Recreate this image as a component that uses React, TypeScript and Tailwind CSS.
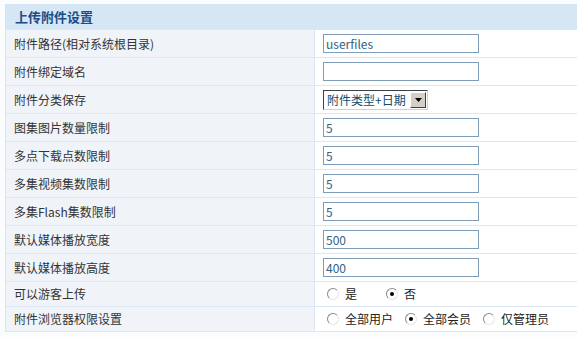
const FONT = { fontFamily: '"Noto Sans CJK SC", "Liberation Sans", sans-serif' }

type Row =
    | { label: string; kind: "input"; value: string }
    | { label: string; kind: "select"; value: string }
    | { label: string; kind: "radio"; options: string[]; checked: number; gaps: string[] }

const ROWS: Row[] = [
    { label: "附件路径(相对系统根目录)", kind: "input", value: "userfiles" },
    { label: "附件绑定域名", kind: "input", value: "" },
    { label: "附件分类保存", kind: "select", value: "附件类型+日期" },
    { label: "图集图片数量限制", kind: "input", value: "5" },
    { label: "多点下载点数限制", kind: "input", value: "5" },
    { label: "多集视频集数限制", kind: "input", value: "5" },
    { label: "多集Flash集数限制", kind: "input", value: "5" },
    { label: "默认媒体播放宽度", kind: "input", value: "500" },
    { label: "默认媒体播放高度", kind: "input", value: "400" },
    { label: "可以游客上传", kind: "radio", options: ["是", "否"], checked: 1, gaps: ["mr-[29px]", ""] },
    { label: "附件浏览器权限设置", kind: "radio", options: ["全部用户", "全部会员", "仅管理员"], checked: 1, gaps: ["mr-[12px]", "mr-[12px]", ""] },
]

function Radio({ on }: { on: boolean }) {
    return (
        <span className="relative inline-flex items-center justify-center w-[12px] h-[12px] rounded-full border border-t-[#8a8a8a] border-l-[#8a8a8a] border-r-[#e6e6e6] border-b-[#e6e6e6] bg-white mr-[6px]">
            {on && <span className="w-[4px] h-[4px] rounded-full bg-black" />}
        </span>
    )
}

function Field({ row }: { row: Row }) {
    if (row.kind === "input") {
        return (
            <div className="w-[156px] h-[19px] border border-[#7f9db9] bg-white flex items-center px-[2px] text-[12px] text-[#35607f]">
                {row.value}
            </div>
        )
    }
    if (row.kind === "select") {
        return (
            <div className="flex items-center h-[20px] w-[105px] border border-t-[#404040] border-l-[#404040] border-r-[#d4d0c8] border-b-[#d4d0c8] bg-white">
                <span className="flex-1 pl-[3px] text-[12px] text-[#0d4d70] leading-none">{row.value}</span>
                <span className="w-[16px] h-[16px] mr-[1px] bg-[#d4d0c8] border border-t-white border-l-white border-r-[#404040] border-b-[#404040] flex items-center justify-center">
                    <svg width="7" height="4" viewBox="0 0 7 4"><path d="M0 0h7L3.5 4z" fill="#000" /></svg>
                </span>
            </div>
        )
    }
    return (
        <div className="flex items-center pl-[4px] text-[12px] text-[#222]">
            {row.options.map((o, i) => (
                <span key={o} className={`flex items-center ${row.gaps[i]}`}>
                    <Radio on={i === row.checked} />
                    {o}
                </span>
            ))}
        </div>
    )
}

export default function App() {
    return (
        <div className="w-[577px] h-[337px] bg-[#fafcfe] pt-[4px] pl-[5px] overflow-hidden" style={FONT}>
            <div className="border-l border-[#d6e4f1]">
                <div className="h-[25px] bg-[#d5e6f5] flex items-center pl-[9px] text-[13px] font-bold text-[#1a4d86]">
                    上传附件设置
                </div>
                {ROWS.map((r) => (
                    <div
                        key={r.label}
                        className={`flex border-t border-[#dbe8f4] ${r.kind === "radio" ? "h-[25px]" : "h-[28px]"}`}
                    >
                        <div className="w-[309px] shrink-0 bg-[#f0f4f9] border-r border-[#dbe8f4] flex items-center pl-[8px] text-[12px] text-[#333]">
                            {r.label}
                        </div>
                        <div className="flex-1 bg-white flex items-center pl-[8px]">
                            <Field row={r} />
                        </div>
                    </div>
                ))}
                <div className="border-t border-[#dbe8f4]" />
            </div>
        </div>
    )
}
